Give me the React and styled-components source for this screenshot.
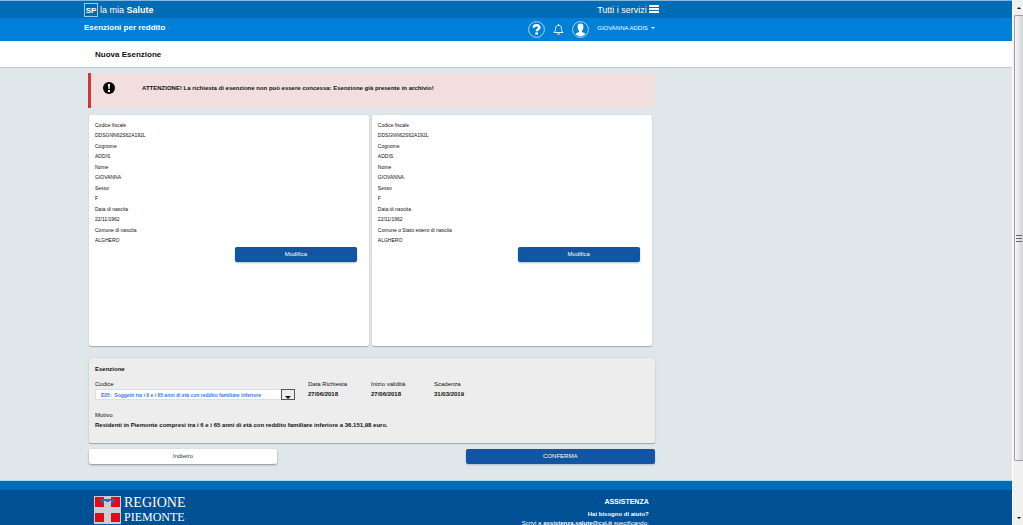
import React, { useState } from "react";
import styled, { createGlobalStyle, ThemeProvider } from "styled-components";

const theme = {
  top_blue: "#006cb5",
  bar_blue: "#0080d9",
  footer_blue: "#005096",
  button_blue: "#1155a3",
  page_background: "#e0e7ea",
  alert_background: "#f2dede",
  alert_red: "#d0373b",
  panel_grey: "#ededed",
  font_size_tiny: "5px",
  font_size_content: "6px",
  font_size_title: "8px",
};

const GlobalStyle = createGlobalStyle`
  * {
    box-sizing: border-box;
  }
  body {
    margin: 0;
    font-family: "Liberation Sans", Arial, sans-serif;
    color: #111;
  }
  button, select {
    font-family: inherit;
  }
`;

const Shell = styled.div`
  display: grid;
  grid-template-columns: 1fr 11px;
  height: 100vh;
  overflow: hidden;
`;

const Page = styled.div`
  display: flex;
  flex-direction: column;
  min-width: 0;
  overflow: hidden;
  background: ${props => props.theme.page_background};
`;

const Column = styled.div`
  width: 56%;
  margin-left: ${props => (props.$wide ? "84px" : "88px")};
`;

const TopBar = styled.div`
  flex: none;
  height: 18px;
  border-top: 1px solid #7db9e3;
  background: ${props => props.theme.top_blue};
`;

const TopRow = styled(Column)`
  display: flex;
  justify-content: space-between;
  align-items: center;
  height: 17px;
  padding-right: 2px;
  width: 57%;
`;

const Brand = styled.a`
  display: flex;
  align-items: center;
  gap: 2px;
  color: #fff;
  font-size: 9px;
  text-decoration: none;
`;

const BrandBox = styled.span`
  border: 1px solid #9ccbea;
  width: 14px;
  height: 14px;
  line-height: 13px;
  text-align: center;
  font-size: ${props => props.theme.font_size_title};
  font-weight: bold;
`;

const ServicesButton = styled.button`
  display: flex;
  align-items: center;
  gap: 2px;
  border: 0;
  padding: 0;
  background: none;
  color: #fff;
  font-size: 9px;
`;

const ServiceBar = styled.header`
  flex: none;
  height: 23px;
  background: ${props => props.theme.bar_blue};
`;

const ServiceRow = styled(Column)`
  display: flex;
  justify-content: space-between;
  height: 23px;
  width: 57%;
  padding-right: 6px;
`;

const ServiceName = styled.span`
  color: #fff;
  font-size: ${props => props.theme.font_size_title};
  font-weight: bold;
  line-height: 19px;
`;

const UserTools = styled.div`
  display: flex;
  align-items: center;
  gap: 8px;
`;

const IconButton = styled.button`
  display: flex;
  border: 0;
  padding: 0;
  background: none;
`;

const UserButton = styled.button`
  display: flex;
  align-items: center;
  gap: 3px;
  border: 0;
  padding: 0 0 3px;
  background: none;
  color: #fff;
  font-size: ${props => props.theme.font_size_content};
`;

const TitleBar = styled.div`
  flex: none;
  height: 27px;
  border-bottom: 1px solid #c5cccf;
  background: #fff;
`;

const Title = styled.h1`
  margin: 0 0 0 95px;
  font-size: ${props => props.theme.font_size_title};
  line-height: 27px;
`;

const Main = styled(Column)`
  flex: none;
  padding: 5px 0 17px;
`;

const Alert = styled.div`
  display: flex;
  align-items: center;
  height: 35px;
  border-left: 3px solid ${props => props.theme.alert_red};
  background: ${props => props.theme.alert_background};
  padding: 0 0 5px 12px;
  gap: 27px;
`;

const AlertText = styled.p`
  margin: 0;
  font-size: ${props => props.theme.font_size_content};
  font-weight: bold;
`;

const Cards = styled.div`
  display: grid;
  grid-template-columns: 1fr 1fr;
  gap: 3px;
  margin-top: 7px;
  padding: 0 3px 0 1px;
`;

const Card = styled.section`
  min-height: 231px;
  border-radius: 2px;
  background: #fff;
  box-shadow: 0 1px 1px #a5abae, 0 0 1px #b9c0c3;
  padding: 5px 12px 0 6px;
`;

const DataList = styled.dl`
  margin: 0 0 1px;
  font-size: ${props => props.theme.font_size_tiny};

  dt {
    line-height: 10px;
  }
  dd {
    margin: 0;
    line-height: 11px;
  }
`;

const Button = styled.button`
  display: block;
  width: ${props => props.$width};
  height: 15px;
  border: 0;
  border-radius: 2px;
  padding: 0;
  background: ${props => (props.$plain ? "#fff" : props.theme.button_blue)};
  color: ${props => (props.$plain ? "#1d4048" : "#fff")};
  font-size: ${props => props.theme.font_size_content};
  line-height: 15px;
  box-shadow: 0 1px 2px ${props => (props.$plain ? "#8b9296" : "#a9bdd2")};
`;

const CardAction = styled.div`
  display: flex;
  justify-content: flex-end;
`;

const Panel = styled.section`
  min-height: 85px;
  margin: 12px 0 0 1px;
  border-radius: 2px;
  background: ${props => props.theme.panel_grey};
  box-shadow: 0 1px 1px #a0a6a8, 0 0 2px #b9c0c3;
  padding: 6px;
  font-size: ${props => props.theme.font_size_content};
`;

const PanelTitle = styled.h2`
  margin: 0 0 4px;
  font-size: ${props => props.theme.font_size_content};
  line-height: 11px;
`;

const Fields = styled.div`
  display: grid;
  grid-template-columns: 200px 50px 50px 50px;
  column-gap: 13px;
`;

const Field = styled.div`
  line-height: 10px;
  white-space: nowrap;

  label, span {
    display: block;
  }
  strong {
    display: block;
  }
`;

const SelectBox = styled.div`
  display: grid;
  grid-template-columns: 1fr 14px;
  height: 11px;
`;

const Select = styled.select`
  grid-area: 1 / 1 / 2 / 3;
  appearance: none;
  min-width: 0;
  border: 1px solid #d5e0ee;
  border-radius: 0;
  padding: 0 16px 0 5px;
  background: #fff;
  color: #3b78e7;
  font-size: ${props => props.theme.font_size_tiny};
  font-weight: bold;
`;

const SelectArrow = styled.div`
  grid-area: 1 / 2;
  display: flex;
  align-items: flex-end;
  justify-content: center;
  border: 1px solid #555;
  background: #ededed;
  pointer-events: none;
  z-index: 1;
`;

const Reason = styled(Field)`
  margin-top: 10px;
`;

const Actions = styled.div`
  display: flex;
  justify-content: space-between;
  margin: 6px 0 0 1px;
`;

const Footer = styled.footer`
  flex: 1 0 auto;
  border-top: 9px solid ${props => props.theme.top_blue};
  background: ${props => props.theme.footer_blue};
  box-shadow: 0 -1px 0 #a9dcf5;
  color: #fff;
`;

const FooterRow = styled(Column)`
  display: flex;
  justify-content: space-between;
  padding: 6px 6px 0;
`;

const Region = styled.div`
  display: flex;
  gap: 3px;
  font-family: "Liberation Serif", serif;
`;

const RegionName = styled.span`
  display: block;
  font-size: ${props => props.$size};
  line-height: 14px;
`;

const Help = styled.div`
  text-align: right;
  font-size: ${props => props.theme.font_size_content};
  line-height: 9px;

  h3 {
    margin: 0 0 3px;
    font-size: 7px;
    line-height: 11px;
  }
  p {
    margin: 0;
  }
  a {
    color: #fff;
    font-weight: bold;
    text-decoration: none;
  }
`;

const ScrollBar = styled.div`
  display: flex;
  flex-direction: column;
  border-left: 1px solid #fff;
  background: #f0f0f0;
`;

const ScrollArrow = styled.div`
  display: flex;
  flex: none;
  align-items: center;
  justify-content: center;
  height: 15px;
  padding-left: 2px;
`;

const ScrollThumb = styled.div`
  display: flex;
  flex: 1;
  align-items: center;
  justify-content: center;
  margin: 0 0 49px 1px;
  border: 1px solid #a0a0a4;
  border-right: 0;
  border-radius: 2px 0 0 2px;
  background: linear-gradient(90deg, #f7f7f7, #d3d3d6);
`;

const CrossIcon = () => (
  <svg width="27" height="28" viewBox="0 0 27 28" aria-hidden="true">
    <rect width="27" height="28" fill="#c9ced6" />
    <g fill="#e20a17">
      <rect x="1" y="1" width="9" height="10" />
      <rect x="17" y="1" width="9" height="10" />
      <rect x="1" y="17" width="9" height="9" />
      <rect x="17" y="17" width="9" height="9" />
    </g>
    <path d="M6 3h15v2h-2v2h-2V5h-2v1h-3V5h-2v2H8V5H6z" fill="#2d6fb0" />
  </svg>
);

const HelpIcon = () => (
  <svg width="17" height="17" viewBox="0 0 17 17" fill="none">
    <circle cx="8.500" cy="8.500" r="7.900" stroke="#a9d5f5" />
    <path d="M5.700 6.800C5.700 3.400 11.400 3.400 11.400 6.500C11.400 8.400 8.700 8.300 8.700 10.300" stroke="#fff" strokeWidth="2.400" />
    <rect x="7.400" y="11.300" width="2.500" height="2.400" fill="#fff" />
  </svg>
);

const BellIcon = () => (
  <svg width="11" height="13" viewBox="0 0 11 13" fill="none" stroke="#fff">
    <path d="M1 9.500C2.500 8 2.500 7 2.500 5.500C2.500 1.400 8.500 1.400 8.500 5.500C8.500 7 8.500 8 10 9.500Z" />
    <path d="M5.500 1v1.500M4.200 11h2.600" />
  </svg>
);

const UserIcon = () => (
  <svg width="17" height="17" viewBox="0 0 17 17">
    <circle cx="8.500" cy="8.500" r="7.900" fill="none" stroke="#a9d5f5" />
    <path d="M8.500 2.500C10.700 2.500 11.700 4 11.400 6.200C11.200 7.900 10.600 9 10 9.700V11L13.500 12.600C12.300 14.500 10.500 15.400 8.500 15.400C6.500 15.400 4.700 14.500 3.500 12.600L7 11V9.700C6.400 9 5.800 7.900 5.600 6.200C5.300 4 6.300 2.500 8.500 2.500Z" fill="#fff" />
  </svg>
);

const MenuIcon = () => (
  <svg width="10" height="9" viewBox="0 0 10 9" fill="#fff">
    <path d="M0 0h10v2H0zM0 3h10v2H0zM0 6h10v2H0z" />
  </svg>
);

const AlertIcon = () => (
  <svg width="12" height="12" viewBox="0 0 12 12">
    <circle cx="6" cy="6" r="6" fill="#000" />
    <path d="M5 2h2l-.4 5H5.400zM5 8h2v2H5z" fill="#fff" />
  </svg>
);

const Triangle = ({ size = 6, up = false, color = "#111" }) => (
  <svg width={size} height={size / 2} viewBox="0 0 6 3" fill={color}>
    <path d={up ? "M0 3L3 0L6 3z" : "M0 0h6L3 3z"} />
  </svg>
);

const person = birthLabel => [
  ["Codice fiscale", "DDSGNN62S62A192L"],
  ["Cognome", "ADDIS"],
  ["Nome", "GIOVANNA"],
  ["Sesso", "F"],
  ["Data di nascita", "22/11/1962"],
  [birthLabel, "ALGHERO"],
];

const dates = [
  ["Data Richiesta", "27/06/2018"],
  ["Inizio validità", "27/06/2018"],
  ["Scadenza", "31/03/2019"],
];

const PersonCard = ({ birthLabel }) => (
  <Card>
    <DataList>
      {person(birthLabel).map(([label, value]) => (
        <React.Fragment key={label}>
          <dt>{label}</dt>
          <dd>{value}</dd>
        </React.Fragment>
      ))}
    </DataList>
    <CardAction>
      <Button type="button" $width="122px">Modifica</Button>
    </CardAction>
  </Card>
);

const App = () => {
  const [code, setCode] = useState("E05");

  return (
    <ThemeProvider theme={theme}>
      <GlobalStyle />
      <Shell>
        <Page>
          <TopBar>
            <TopRow $wide>
              <Brand href="#">
                <BrandBox>SP</BrandBox>
                <span>la mia <b>Salute</b></span>
              </Brand>
              <ServicesButton type="button">
                Tutti i servizi <MenuIcon />
              </ServicesButton>
            </TopRow>
          </TopBar>
          <ServiceBar>
            <ServiceRow $wide>
              <ServiceName>Esenzioni per reddito</ServiceName>
              <UserTools>
                <IconButton type="button" aria-label="Aiuto"><HelpIcon /></IconButton>
                <IconButton type="button" aria-label="Notifiche"><BellIcon /></IconButton>
                <UserIcon />
                <UserButton type="button">
                  GIOVANNA ADDIS <Triangle size={4} color="#fff" />
                </UserButton>
              </UserTools>
            </ServiceRow>
          </ServiceBar>
          <TitleBar>
            <Title>Nuova Esenzione</Title>
          </TitleBar>

          <Main as="main">
            <Alert role="alert">
              <AlertIcon />
              <AlertText>
                ATTENZIONE! La richiesta di esenzione non può essere concessa: Esenzione già presente in archivio!
              </AlertText>
            </Alert>

            <Cards>
              <PersonCard birthLabel="Comune di nascita" />
              <PersonCard birthLabel="Comune o Stato estero di nascita" />
            </Cards>

            <Panel>
              <PanelTitle>Esenzione</PanelTitle>
              <Fields>
                <Field>
                  <label htmlFor="codice">Codice</label>
                  <SelectBox>
                    <Select id="codice" value={code} onChange={e => setCode(e.target.value)}>
                      <option value="E05">E05:&nbsp; Soggetti tra i 6 e i 65 anni di età con reddito familiare inferiore</option>
                    </Select>
                    <SelectArrow><Triangle /></SelectArrow>
                  </SelectBox>
                </Field>
                {dates.map(([label, value]) => (
                  <Field key={label}>
                    <span>{label}</span>
                    <strong>{value}</strong>
                  </Field>
                ))}
              </Fields>
              <Reason>
                <span>Motivo</span>
                <strong>Residenti in Piemonte compresi tra i 6 e i 65 anni di età con reddito familiare inferiore a 36.151,98 euro.</strong>
              </Reason>
            </Panel>

            <Actions>
              <Button type="button" $plain $width="188px">Indietro</Button>
              <Button type="button" $width="189px">CONFERMA</Button>
            </Actions>
          </Main>

          <Footer>
            <FooterRow>
              <Region>
                <CrossIcon />
                <div>
                  <RegionName $size="14px">REGIONE</RegionName>
                  <RegionName $size="12px">PIEMONTE</RegionName>
                </div>
              </Region>
              <Help>
                <h3>ASSISTENZA</h3>
                <p><b>Hai bisogno di aiuto?</b></p>
                <p>Scrivi a <a href="mailto:assistenza.salute@csi.it">assistenza.salute@csi.it</a> specificando:</p>
              </Help>
            </FooterRow>
          </Footer>
        </Page>
        <ScrollBar aria-hidden="true">
          <ScrollArrow><Triangle size={4} up /></ScrollArrow>
          <ScrollThumb>
            <svg width="6" height="7" viewBox="0 0 6 7" fill="#666">
              <path d="M0 0h6v1H0zM0 3h6v1H0zM0 6h6v1H0z" />
            </svg>
          </ScrollThumb>
          <ScrollArrow><Triangle size={4} /></ScrollArrow>
        </ScrollBar>
      </Shell>
    </ThemeProvider>
  );
};

export default App;
